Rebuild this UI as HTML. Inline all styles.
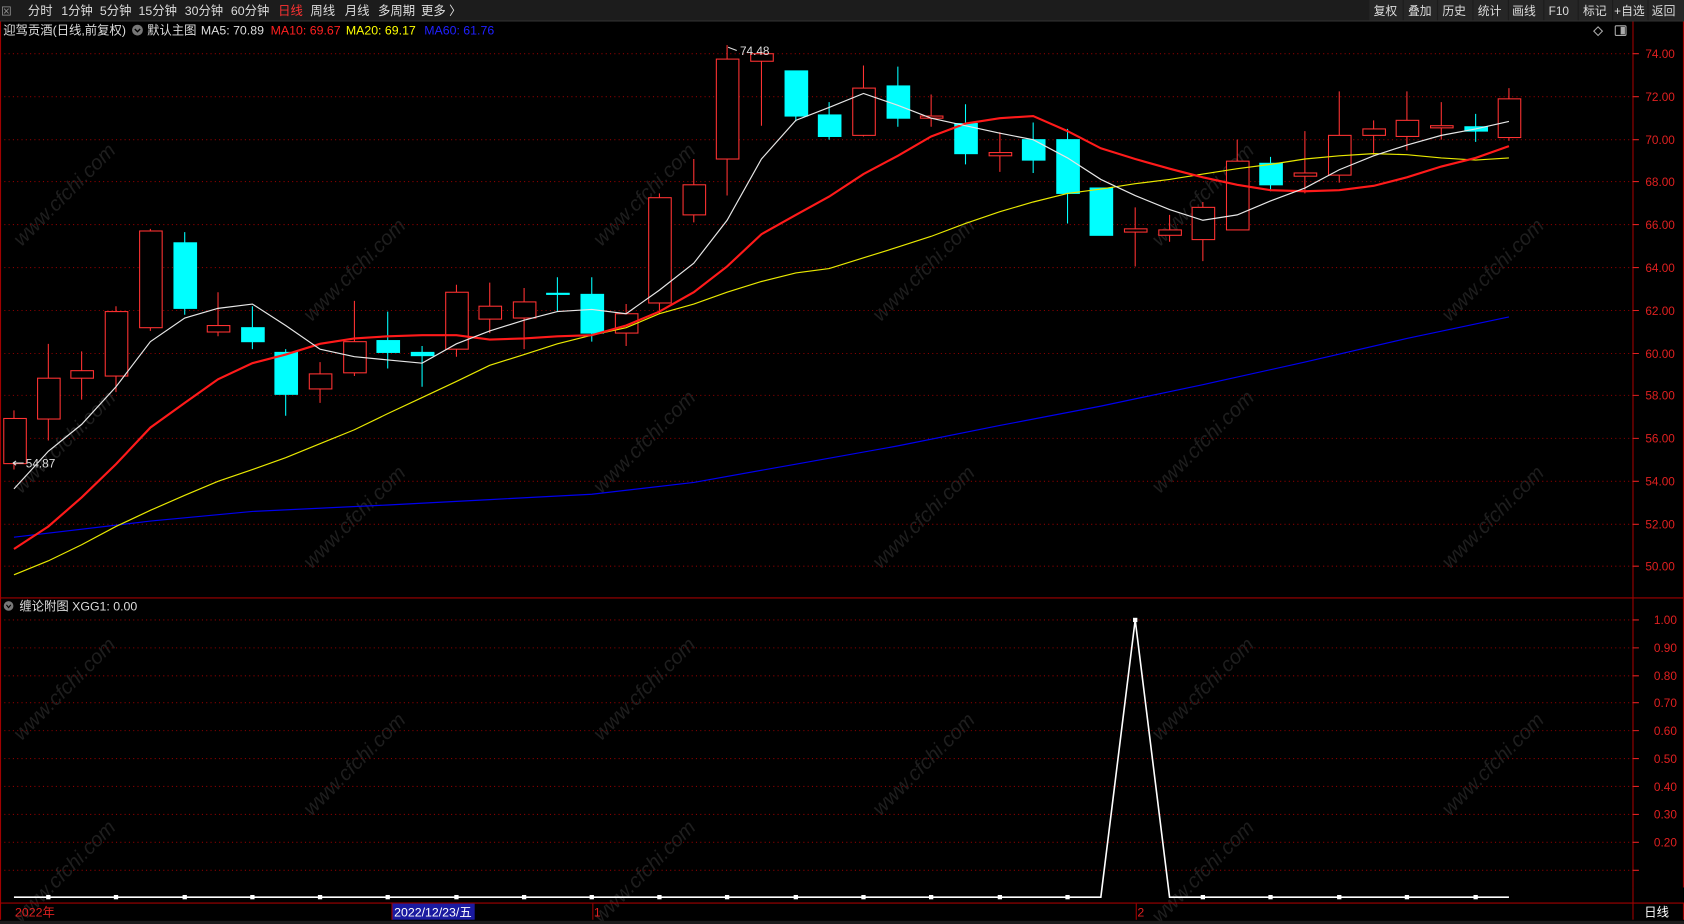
<!DOCTYPE html>
<html><head><meta charset="utf-8"><style>
html,body{margin:0;padding:0;background:#000;overflow:hidden}
svg{display:block}
text{font-family:"Liberation Sans","Noto Sans CJK SC",sans-serif}
</style></head><body>
<svg width="1684" height="924" viewBox="0 0 1568 860" preserveAspectRatio="none" xmlns="http://www.w3.org/2000/svg">
<rect width="1568" height="860" fill="#000"/>
<!-- watermarks -->
<g fill="#1e1e1e" font-size="19" font-style="italic">
<text transform="translate(20,230) rotate(-45)">www.cfchi.com</text>
<text transform="translate(290,300) rotate(-45)">www.cfchi.com</text>
<text transform="translate(560,230) rotate(-45)">www.cfchi.com</text>
<text transform="translate(820,300) rotate(-45)">www.cfchi.com</text>
<text transform="translate(1080,230) rotate(-45)">www.cfchi.com</text>
<text transform="translate(1350,300) rotate(-45)">www.cfchi.com</text>
<text transform="translate(20,460) rotate(-45)">www.cfchi.com</text>
<text transform="translate(290,530) rotate(-45)">www.cfchi.com</text>
<text transform="translate(560,460) rotate(-45)">www.cfchi.com</text>
<text transform="translate(820,530) rotate(-45)">www.cfchi.com</text>
<text transform="translate(1080,460) rotate(-45)">www.cfchi.com</text>
<text transform="translate(1350,530) rotate(-45)">www.cfchi.com</text>
<text transform="translate(20,690) rotate(-45)">www.cfchi.com</text>
<text transform="translate(290,760) rotate(-45)">www.cfchi.com</text>
<text transform="translate(560,690) rotate(-45)">www.cfchi.com</text>
<text transform="translate(820,760) rotate(-45)">www.cfchi.com</text>
<text transform="translate(1080,690) rotate(-45)">www.cfchi.com</text>
<text transform="translate(1350,760) rotate(-45)">www.cfchi.com</text>
<text transform="translate(20,860) rotate(-45)">www.cfchi.com</text>
<text transform="translate(560,860) rotate(-45)">www.cfchi.com</text>
<text transform="translate(1080,860) rotate(-45)">www.cfchi.com</text>
</g>
<!-- toolbar -->
<rect x="0" y="0" width="1568" height="19" fill="#1c1c1c"/>
<line x1="0" y1="19.5" x2="1568" y2="19.5" stroke="#333"/>
<g font-size="11.5" fill="#ddd">
<text x="1" y="14" fill="#999" font-size="10">⊠</text>
<text x="26" y="14">分时</text><text x="57" y="14">1分钟</text><text x="93" y="14">5分钟</text>
<text x="129" y="14">15分钟</text><text x="172" y="14">30分钟</text><text x="215" y="14">60分钟</text>
<text x="259" y="14" fill="#ff3232">日线</text><text x="289" y="14">周线</text><text x="321" y="14">月线</text>
<text x="352" y="14">多周期</text><text x="392" y="14">更多 〉</text>
</g>
<g fill="#262626"><rect x="1275" y="0" width="31" height="19"/><rect x="1307" y="0" width="31" height="19"/><rect x="1339" y="0" width="32" height="19"/><rect x="1372" y="0" width="32" height="19"/><rect x="1405" y="0" width="32" height="19"/><rect x="1438" y="0" width="31" height="19"/><rect x="1470" y="0" width="31" height="19"/><rect x="1502" y="0" width="32" height="19"/><rect x="1535" y="0" width="33" height="19"/></g>
<g font-size="11" fill="#ddd">
<text x="1279" y="14">复权</text><text x="1311" y="14">叠加</text><text x="1343" y="14">历史</text><text x="1376" y="14">统计</text>
<text x="1408" y="14">画线</text><text x="1442" y="14">F10</text><text x="1474" y="14">标记</text><text x="1503" y="14">+自选</text><text x="1538" y="14">返回</text>
</g>
<!-- header -->
<g font-size="11.5">
<text x="3" y="32" fill="#ddd">迎驾贡酒(日线,前复权)</text>
<circle cx="128" cy="28" r="5" fill="#777"/><path d="M125.5 27 L128 29.5 L130.5 27" stroke="#000" fill="none" stroke-width="1.3"/>
<text x="137" y="32" fill="#ddd">默认主图</text>
<text x="187" y="32" fill="#ddd">MA5: 70.89</text>
<text x="252" y="32" fill="#ff2020">MA10: 69.67</text>
<text x="322" y="32" fill="#ffff00">MA20: 69.17</text>
<text x="395" y="32" fill="#2020ff">MA60: 61.76</text>
</g>
<g stroke="#aaa" fill="none"><path d="M1488 25 l4 4 -4 4 -4 -4z"/><rect x="1504" y="24" width="10" height="9" rx="1"/><rect x="1509" y="25" width="4" height="7" fill="#aaa" stroke="none"/></g>
<!-- grid -->
<g stroke="#8b0000" stroke-dasharray="1,3" stroke-width="1">
<path d="M0 50H1518M0 90H1518M0 130H1518M0 169H1518M0 209H1518M0 249H1518M0 289H1518M0 329H1518M0 368H1518M0 408H1518M0 448H1518M0 488H1518M0 527H1518"/>
<path d="M0 577H1518M0 603H1518M0 629H1518M0 654H1518M0 680H1518M0 706H1518M0 732H1518M0 758H1518M0 784H1518M0 810H1518"/>
</g>
<!-- frame -->
<g stroke="#a00000" fill="none">
<line x1="1520.5" y1="20" x2="1520.5" y2="840"/>
<line x1="0" y1="556.5" x2="1568" y2="556.5"/>
<line x1="0" y1="840.5" x2="1568" y2="840.5"/>
<line x1="0.5" y1="20" x2="0.5" y2="856"/>
<line x1="1567.5" y1="20" x2="1567.5" y2="856"/>
</g>
<!-- axis labels -->
<g font-size="11" fill="#e02020">
<text x="1532" y="54">74.00</text><text x="1532" y="94">72.00</text><text x="1532" y="134">70.00</text><text x="1532" y="173">68.00</text>
<text x="1532" y="213">66.00</text><text x="1532" y="253">64.00</text><text x="1532" y="293">62.00</text><text x="1532" y="333">60.00</text>
<text x="1532" y="372">58.00</text><text x="1532" y="412">56.00</text><text x="1532" y="452">54.00</text><text x="1532" y="492">52.00</text><text x="1532" y="531">50.00</text>
<text x="1540" y="581">1.00</text><text x="1540" y="607">0.90</text><text x="1540" y="633">0.80</text><text x="1540" y="658">0.70</text>
<text x="1540" y="684">0.60</text><text x="1540" y="710">0.50</text><text x="1540" y="736">0.40</text><text x="1540" y="762">0.30</text><text x="1540" y="788">0.20</text>
</g>
<g stroke="#e02020"><path d="M1520 50h6M1520 90h6M1520 130h6M1520 169h6M1520 209h6M1520 249h6M1520 289h6M1520 329h6M1520 368h6M1520 408h6M1520 448h6M1520 488h6M1520 527h6M1520 577h6M1520 603h6M1520 629h6M1520 654h6M1520 680h6M1520 706h6M1520 732h6M1520 758h6M1520 784h6M1520 810h6"/></g>
<!-- candles red -->
<g stroke="#ff3232" fill="#000" stroke-width="1">
<path d="M13 382V437M45 320V410M76 327V372M108 285V365M140 213V308M203 272V313M298 337V375M330 280V350M425 265V332M456 263V310M488 268V325M583 283V322M614 180V292M646 148V207M677 42V182M709 48V117M804 61V127M867 88V118M931 123V160M1057 193V248M1089 200V225M1120 188V243M1152 130V214M1215 122V180M1247 85V170M1279 112V144M1310 85V140M1342 95V130M1405 82V131"/>
<rect x="3.5" y="389.5" width="21" height="42"/><rect x="35" y="352" width="21" height="38"/><rect x="66" y="345" width="21" height="7"/>
<rect x="98" y="290" width="21" height="60"/><rect x="130" y="215" width="21" height="90"/><rect x="193" y="303" width="21" height="6"/>
<rect x="288" y="348" width="21" height="14"/><rect x="320" y="318" width="21" height="29"/><rect x="415" y="272" width="21" height="53"/>
<rect x="446" y="285" width="21" height="12"/><rect x="478" y="281" width="21" height="15"/><rect x="573" y="292" width="21" height="18"/>
<rect x="604" y="184" width="21" height="98"/><rect x="636" y="172" width="21" height="28"/><rect x="667" y="55" width="21" height="93"/>
<rect x="699" y="50" width="21" height="7"/><rect x="794" y="82" width="21" height="44"/><rect x="857" y="108" width="21" height="2"/>
<rect x="921" y="142" width="21" height="3"/><rect x="1047" y="213" width="21" height="3"/><rect x="1079" y="214" width="21" height="5"/>
<rect x="1110" y="193" width="21" height="30"/><rect x="1142" y="150" width="21" height="64"/><rect x="1205" y="161" width="21" height="3"/>
<rect x="1237" y="126" width="21" height="37"/><rect x="1269" y="120" width="21" height="6"/><rect x="1300" y="112" width="21" height="15"/>
<rect x="1332" y="117" width="21" height="2"/><rect x="1395" y="92" width="21" height="36"/>
</g>
<!-- candles cyan -->
<g stroke="#00ffff" fill="#00ffff">
<path d="M172 216V293M235 285V325M266 325V387M361 290V343M393 322V360M519 258V290M551 258V318M741 66V113M772 95V130M836 62V118M899 97V153M962 114V161M994 120V208M1025 175V219M1183 146V178M1374 106V132" fill="none"/>
<rect x="162" y="226" width="21" height="61"/><rect x="225" y="305" width="21" height="13"/><rect x="256" y="328" width="21" height="39"/>
<rect x="351" y="317" width="21" height="11"/><rect x="383" y="328" width="21" height="3"/><rect x="509" y="273" width="21" height="1"/>
<rect x="541" y="274" width="21" height="36"/><rect x="731" y="66" width="21" height="42"/><rect x="762" y="107" width="21" height="20"/>
<rect x="826" y="80" width="21" height="30"/><rect x="889" y="115" width="21" height="28"/><rect x="952" y="130" width="21" height="19"/>
<rect x="984" y="130" width="21" height="50"/><rect x="1015" y="175" width="21" height="44"/><rect x="1173" y="152" width="21" height="20"/>
<rect x="1364" y="118" width="21" height="4"/>
</g>
<!-- MAs -->
<g fill="none" stroke-width="1.3">
<polyline stroke="#0000ee" stroke-width="1.1" points="13,500 140,485 235,476 361,470 456,465 551,460 646,449 741,432 836,415 931,396 1025,378 1120,358 1215,337 1310,315 1405,295"/>
<polyline stroke="#e8e800" stroke-width="1.1" points="13,535 45,522 76,507 108,490 140,475 172,461 203,448 235,437 266,426 298,413 330,400 361,385 393,370 425,355 456,340 488,330 519,320 551,312 583,305 614,292 646,283 677,272 709,262 741,254 772,250 804,240 836,230 867,220 899,208 931,197 962,188 994,180 1025,176 1057,171 1089,167 1120,162 1152,157 1183,153 1215,148 1247,145 1279,143 1310,144 1342,147 1374,149 1405,147"/>
<polyline stroke="#ff1a1a" stroke-width="2" points="13,511 45,490 76,463 108,432 140,398 172,375 203,353 235,338 266,330 298,320 330,315 361,313 393,312 425,312 456,316 488,315 519,313 551,312 583,303 614,290 646,272 677,248 709,218 741,200 772,183 804,162 836,145 867,127 899,115 931,110 962,108 994,122 1025,138 1057,148 1089,157 1120,165 1152,172 1183,177 1215,178 1247,177 1279,173 1310,165 1342,155 1374,147 1405,136"/>
<polyline stroke="#e6e6e6" stroke-width="1.1" points="13,455 45,420 76,395 108,360 140,318 172,296 203,287 235,283 266,303 298,325 330,332 361,335 393,338 425,320 456,308 488,298 519,290 551,288 583,292 614,270 646,245 677,205 709,148 741,112 772,100 804,87 836,98 867,110 899,117 931,124 962,130 994,147 1025,167 1057,182 1089,195 1120,205 1152,200 1183,187 1215,175 1247,158 1279,145 1310,135 1342,126 1374,120 1405,113"/>
</g>
<g font-size="11" fill="#ddd"><text x="689" y="51">74.48</text><text x="24" y="435">54.87</text></g>
<path d="M678 44l8 3M12 431h10M12 431l3 -2M12 431l3 2" stroke="#ddd" fill="none"/>
<!-- sub panel -->
<circle cx="8" cy="564" r="4.5" fill="#777"/><path d="M6 563 L8 565.5 L10 563" stroke="#000" fill="none"/>
<text x="18" y="568" font-size="11.5" fill="#ddd">缠论附图  XGG1: 0.00</text>
<polyline fill="none" stroke="#fff" stroke-width="1.5" points="13,835 1025,835 1057,577 1089,835 1405,835"/>
<g fill="#fff">
<rect x="43" y="833" width="4" height="4"/><rect x="106" y="833" width="4" height="4"/><rect x="170" y="833" width="4" height="4"/><rect x="233" y="833" width="4" height="4"/><rect x="296" y="833" width="4" height="4"/><rect x="359" y="833" width="4" height="4"/><rect x="423" y="833" width="4" height="4"/><rect x="486" y="833" width="4" height="4"/><rect x="549" y="833" width="4" height="4"/><rect x="612" y="833" width="4" height="4"/><rect x="675" y="833" width="4" height="4"/><rect x="739" y="833" width="4" height="4"/><rect x="802" y="833" width="4" height="4"/><rect x="865" y="833" width="4" height="4"/><rect x="929" y="833" width="4" height="4"/><rect x="992" y="833" width="4" height="4"/><rect x="1055" y="575" width="4" height="4"/><rect x="1118" y="833" width="4" height="4"/><rect x="1181" y="833" width="4" height="4"/><rect x="1245" y="833" width="4" height="4"/><rect x="1308" y="833" width="4" height="4"/><rect x="1372" y="833" width="4" height="4"/>
</g>
<!-- bottom axis -->
<rect x="1519" y="826" width="49" height="14" fill="#000"/>
<line x1="1520.5" y1="826" x2="1520.5" y2="856" stroke="#a00000"/>
<rect x="365" y="841" width="77" height="15" fill="#1a1aa0"/>
<g stroke="#a00000"><path d="M365 841v15M552 841v15M1058 841v15"/></g>
<g font-size="11.5">
<text x="14" y="853" fill="#e02020">2022年</text>
<text x="367" y="853" fill="#fff">2022/12/23/五</text>
<text x="553" y="853" fill="#e02020">1</text>
<text x="1059" y="853" fill="#e02020">2</text>
<text x="1531" y="853" fill="#fff">日线</text>
</g>
<rect x="0" y="857" width="1568" height="3" fill="#1c1c1c"/>
</svg>
</body></html>
